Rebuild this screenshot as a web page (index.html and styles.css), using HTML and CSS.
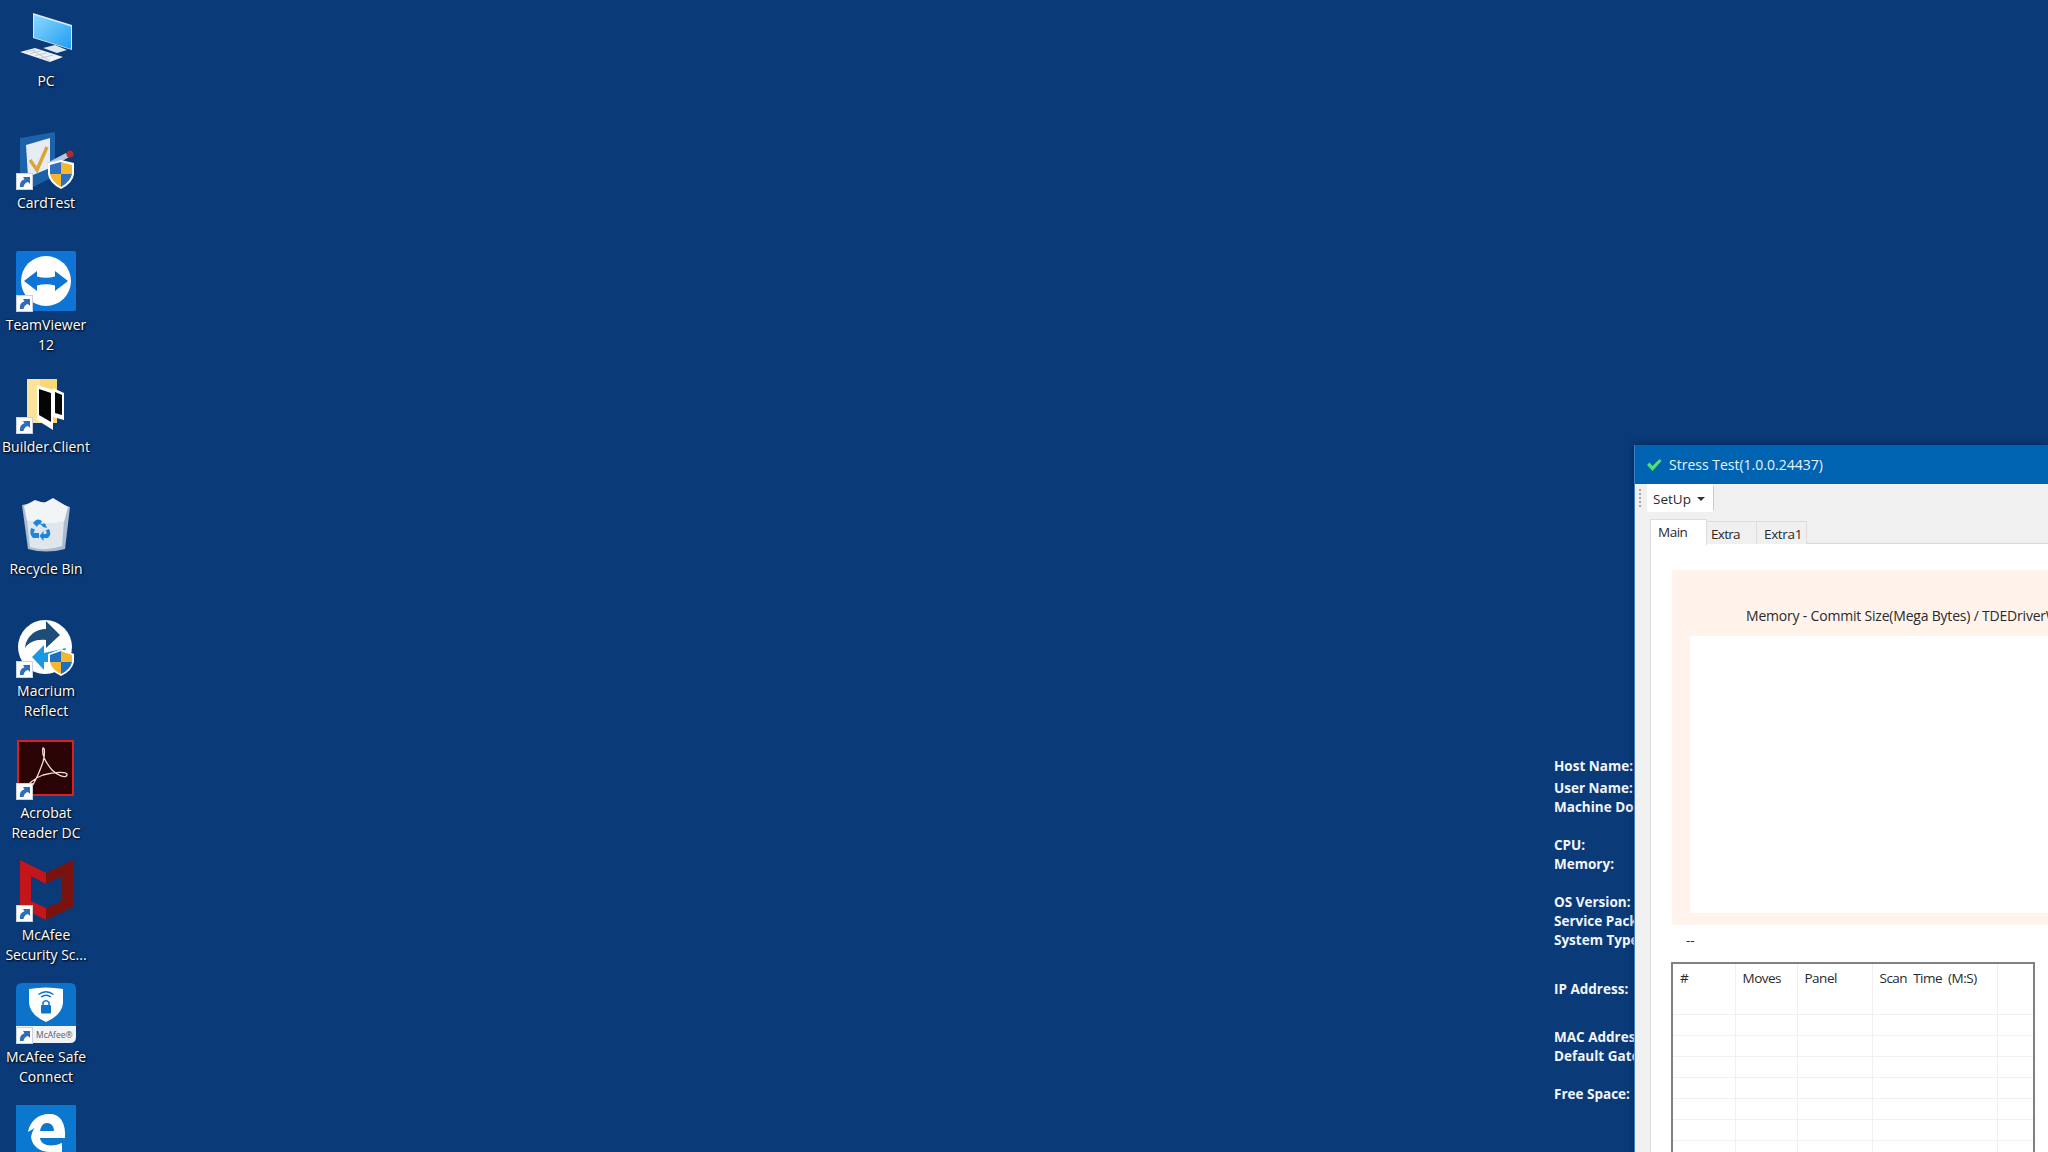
FILE: index.html
```html
<!DOCTYPE html>
<html lang="en">
<head>
<meta charset="utf-8">
<title>Desktop</title>
<link rel="stylesheet" href="styles.css">
</head>
<body>
<svg class="defs" width="0" height="0" aria-hidden="true">
  <defs>
    <symbol id="arrow" viewBox="0 0 17 17">
      <rect x="0.5" y="0.5" width="16" height="16" fill="#fff" stroke="#c9d3de"/>
      <path d="M4 14C3.500 9.500 5.500 7 8.500 6.200L7 4H14V11L12 9C10 9.500 8 11 7.500 14Z" fill="#2f6db5"/>
    </symbol>
    <linearGradient id="screen" x1="0" y1="0" x2="1" y2="1">
      <stop offset="0" stop-color="#8ad8ff"/>
      <stop offset="1" stop-color="#1f9df2"/>
    </linearGradient>
  </defs>
</svg>
<div class="icons">
  <div class="item">
    <div class="icon">
      <svg viewBox="0 0 60 60" class="art">
        <path d="M17 5L56 17V42L17 30Z" fill="#dce8f2"/>
        <path d="M18 7L55 18.500V41L18 29.500Z" fill="url(#screen)"/>
        <path d="M27 40L39 37L51 42L41 45Z" fill="#dfe7ee"/>
        <path d="M4 44L19 40L47 49L34 54Z" fill="#eef2f6"/>
        <path d="M10 44L20 41.500M14 45.500L25 43M19 47.500L31 45M25 50L37 47M16 42L34 53" stroke="#b5c0ca" stroke-width=".8"/>
      </svg>
    </div>
    <div class="label">PC</div>
  </div>
  <div class="item">
    <div class="icon">
      <svg viewBox="0 0 60 60" class="art">
        <path d="M4 8L39 2V46L17 57Q6 54 4 47Z" fill="#1c62ab"/>
        <path d="M10 15L34 8V38L12 47Z" fill="#e7ecf3"/>
        <path d="M14 30L21 40L31 17" fill="none" stroke="#d9a53a" stroke-width="3.500"/>
        <path d="M31 33L50 23L53 27L38 36Z" fill="#b7c7dc"/>
        <circle cx="54" cy="24" r="3.500" fill="#b32b25"/>
        <path d="M32 33L45 30L58 33V44Q57 53 45 59Q33 53 32 44Z" fill="#fff"/>
        <path d="M45 32L34 35V44H45Z" fill="#2d6fc0"/>
        <path d="M45 32L56 35V44H45Z" fill="#f5b631"/>
        <path d="M34 44H45V57Q36 52 34 44Z" fill="#f5b631"/>
        <path d="M45 44H56Q54 52 45 57Z" fill="#2d6fc0"/>
      </svg>
      <svg class="arrow"><use href="#arrow"/></svg>
    </div>
    <div class="label">CardTest</div>
  </div>
  <div class="item">
    <div class="icon">
      <svg viewBox="0 0 60 60" class="art">
        <rect y="-1" width="60" height="60" rx="2" fill="#0e75d6"/>
        <circle cx="30" cy="29" r="25" fill="#fff"/>
        <path d="M8 29L21 19V24.500Q30 27 39 24.500V19L52 29L39 39V33.500Q30 31 21 33.500V39Z" fill="#0e75d6"/>
      </svg>
      <svg class="arrow"><use href="#arrow"/></svg>
    </div>
    <div class="label">TeamViewer<br>12</div>
  </div>
  <div class="item">
    <div class="icon">
      <svg viewBox="0 0 60 60" class="art">
        <path d="M11 5H41V49H11Z" fill="#f8d775"/>
        <path d="M11 5H24V49H11Z" fill="#fbe39b"/>
        <path d="M37 14L48 19V46L37 43Z" fill="#fff"/>
        <path d="M39 18L46 21V41L39 39Z" fill="#060606"/>
        <path d="M21 11L37 16V56L21 46Z" fill="#fff"/>
        <path d="M23 15L35 19V48L23 41Z" fill="#050505"/>
      </svg>
      <svg class="arrow"><use href="#arrow"/></svg>
    </div>
    <div class="label">Builder.Client</div>
  </div>
  <div class="item">
    <div class="icon">
      <svg viewBox="0 0 60 60" class="art">
        <path d="M6 9Q30 2 54 11L49 53Q30 58 12 53Z" fill="#a9bccd"/>
        <path d="M8 10L19 4L28 7L37 2L52 11L48 26Q30 30 11 25Z" fill="#f2f5f8"/>
        <path d="M11 24Q30 30 48 25L46 50Q30 56 14 51Z" fill="#dfe6ed"/>
        <path d="M17 27Q21 21 26 25L24.500 28L29 27.500L31 32L27 31L25.500 29Q22 27 21 31ZM15 32L19 33.500L17.500 37H23V42H17Q13 38 15 32ZM33 33Q36 38 32 42H27.500V45L23.500 40L27.500 35V38H30Q31.500 36 29.500 34.500Z" fill="#1c86dd"/>
      </svg>
    </div>
    <div class="label">Recycle Bin</div>
  </div>
  <div class="item">
    <div class="icon">
      <svg viewBox="0 0 60 60" class="art">
        <circle cx="29" cy="29" r="27" fill="#fff"/>
        <path d="M9 30C10 18 20 11 30 11V3L44 17L30 30V22C20 21 13 24 9 30Z" fill="#1d4d78"/>
        <path d="M50 30L28 35V27L16 39L28 52V44H40L47 38Z" fill="#1998e6"/>
        <path d="M32 36L45 31L58 36V44Q56 53 45 58Q34 53 32 44Z" fill="#fff"/>
        <path d="M45 33L34 37V44H45Z" fill="#1c6fc2"/>
        <path d="M45 33L56 37V44H45Z" fill="#f5b631"/>
        <path d="M34 44H45V56Q36 52 34 44Z" fill="#f5b631"/>
        <path d="M45 44H56Q54 52 45 56Z" fill="#1c6fc2"/>
      </svg>
      <svg class="arrow"><use href="#arrow"/></svg>
    </div>
    <div class="label">Macrium<br>Reflect</div>
  </div>
  <div class="item">
    <div class="icon">
      <svg viewBox="0 0 60 60" class="art">
        <rect x="2" y="1" width="55" height="54" fill="#2a0404" stroke="#d8201f" stroke-width="2"/>
        <path d="M27 8C25 16 31 24 36 30C41 35 50 39 51 35C52 31 38 32 27 35C18 38 9 46 12 49C15 51 22 36 27 22C29 14 29 8 27 8Z" fill="none" stroke="#f3dada" stroke-width="1.300"/>
      </svg>
      <svg class="arrow"><use href="#arrow"/></svg>
    </div>
    <div class="label">Acrobat<br>Reader DC</div>
  </div>
  <div class="item">
    <div class="icon">
      <svg viewBox="0 0 60 60" class="art">
        <path d="M4 -2L30 11V22L15 14V39L30 46V58L4 45Z" fill="#c2161b"/>
        <path d="M57 -2L30 11V22L46 14V39L30 46V58L57 45Z" fill="#7a1310"/>
      </svg>
      <svg class="arrow"><use href="#arrow"/></svg>
    </div>
    <div class="label">McAfee<br>Security Sc...</div>
  </div>
  <div class="item">
    <div class="icon">
      <svg viewBox="0 0 60 60" class="art">
        <path d="M6 -1H54Q60 -1 60 5V42H0V5Q0 -1 6 -1Z" fill="#0d72c9"/>
        <path d="M0 42H60V53Q60 59 54 59H6Q0 59 0 53Z" fill="#f1f3f5"/>
        <path d="M13 5Q30 2 47 5V19Q46 31 30 38Q14 31 13 19Z" fill="#fff"/>
        <rect x="25" y="21" width="10" height="8.500" rx="1" fill="#0d72c9"/>
        <path d="M27 21V18.500Q30 15 33 18.500V21" fill="none" stroke="#0d72c9" stroke-width="1.500"/>
        <path d="M25 13Q30 9.500 35 13M22.500 10.500Q30 5 37.500 10.500" fill="none" stroke="#0d72c9" stroke-width="1.400"/>
      </svg>
      <span class="mcafee-mark">McAfee®</span>
      <svg class="arrow"><use href="#arrow"/></svg>
    </div>
    <div class="label">McAfee Safe<br>Connect</div>
  </div>
  <div class="item">
    <div class="icon">
      <svg viewBox="0 0 60 60" class="art">
        <rect y="-1" width="60" height="60" fill="#0b78d0"/>
        <path d="M12 26C14 14 24 7 35 8C46 9 50 20 49 32H24C25 39 34 42 46 37V46H34C24 46 16 40 15 31C17 22 20 19 25 17C22 19 19 22 12 26ZM24 25H38C38 20 35 17 31 17C27 17 25 20 24 25Z" fill="#fff"/>
      </svg>
    </div>
  </div>
</div>

<div class="sysinfo">
  <div class="info-group">Host Name:</div>
  <div class="info-group near">User Name:<br>Machine Domain:</div>
  <div class="info-group gap">CPU:<br>Memory:</div>
  <div class="info-group gap">OS Version:<br>Service Pack:<br>System Type:</div>
  <div class="info-group wide">IP Address:</div>
  <div class="info-group wide-tight">MAC Address:<br>Default Gateway:</div>
  <div class="info-group gap">Free Space:</div>
</div>

<div class="window">
  <div class="titlebar">
    <svg class="check" viewBox="0 0 16 14"><path d="M1 7L3.500 4.500L6.500 8L13.500 1L15.500 3L6.500 13Z" fill="#4fe06f"/></svg>
    <span>Stress Test(1.0.0.24437)</span>
  </div>
  <div class="toolbar">
    <div class="grip"></div>
    <div class="menu">SetUp <span class="caret"></span></div>
    <div class="tool-sep"></div>
  </div>
  <div class="tabs">
    <div class="tab active">Main</div>
    <div class="tab">Extra</div>
    <div class="tab wide-tab">Extra1</div>
    <div class="tab-rest"></div>
  </div>
  <div class="page">
    <div class="chart">
      <div class="chart-title">Memory - Commit Size(Mega Bytes) / TDEDriverW</div>
      <div class="plot"></div>
    </div>
    <div class="dash">--</div>
    <table class="grid">
      <colgroup><col class="c1"><col class="c2"><col class="c3"><col class="c4"><col class="c5"></colgroup>
      <thead>
        <tr><th>#</th><th>Moves</th><th>Panel</th><th>Scan Time (M:S)</th><th></th></tr>
      </thead>
      <tbody>
        <tr><td></td><td></td><td></td><td></td><td></td></tr>
        <tr><td></td><td></td><td></td><td></td><td></td></tr>
        <tr><td></td><td></td><td></td><td></td><td></td></tr>
        <tr><td></td><td></td><td></td><td></td><td></td></tr>
        <tr><td></td><td></td><td></td><td></td><td></td></tr>
        <tr><td></td><td></td><td></td><td></td><td></td></tr>
        <tr><td></td><td></td><td></td><td></td><td></td></tr>
      </tbody>
    </table>
  </div>
</div>
</body>
</html>
```
FILE: styles.css
```css
* { box-sizing: border-box; }
html, body { margin: 0; height: 100%; }
body {
  position: relative;
  width: 2048px;
  height: 1152px;
  overflow: hidden;
  background: #0a3a78;
  font-family: "Open Sans", "Noto Sans", sans-serif;
}
.defs { position: absolute; }
.icons { display: flex; flex-direction: column; padding-top: 8px; width: 92px; height: 1152px; overflow: hidden; }
.item { flex: 0 0 122px; display: flex; flex-direction: column; align-items: center; }
.icon { position: relative; width: 60px; height: 60px; flex: none; margin-bottom: 3px; }
.art { display: block; width: 60px; height: 60px; overflow: visible; }
.arrow { position: absolute; left: 0; bottom: 0; width: 17px; height: 17px; }
.mcafee-mark {
  position: absolute;
  left: 20px;
  bottom: 4px;
  font-size: 8.5px;
  line-height: 10px;
  color: #55606a;
}
.label {
  width: 92px;
  text-align: center;
  color: #fff;
  font-size: 14px;
  line-height: 20px;
  text-shadow: 1px 1px 2px #000, 0 0 2px rgba(0,0,0,.6);
  white-space: nowrap;
}
.sysinfo {
  position: absolute;
  left: 1554px;
  top: 757px;
  width: 200px;
  color: #f2f6fa;
  font-size: 13.5px;
  font-weight: 700;
  line-height: 19px;
}
.info-group.near { margin-top: 3px; }
.info-group.gap { margin-top: 19px; }
.info-group.wide { margin-top: 30px; }
.info-group.wide-tight { margin-top: 29px; }
.window {
  position: absolute;
  left: 1634px;
  top: 445px;
  width: 414px;
  height: 707px;
  overflow: hidden;
  background: #f0f0f0;
  border-left: 1px solid #3f80c4;
  box-shadow: 0 0 6px rgba(0,20,50,.55);
  color: #2a2a2a;
  font-family: "Open Sans", sans-serif;
  font-size: 13.5px;
}
.titlebar {
  height: 39px;
  background: #0063b1;
  color: #eaf3fb;
  display: flex;
  align-items: center;
  padding-left: 11px;
  gap: 7px;
  font-size: 14px;
  white-space: nowrap;
}
.check { width: 16px; height: 14px; flex: none; }
.toolbar { height: 35px; display: flex; align-items: flex-start; padding-left: 4px; }
.grip {
  width: 2px;
  height: 20px;
  margin: 5px 6px 0 0;
  background: repeating-linear-gradient(#a8a8a8 0 2px, transparent 2px 4px);
}
.menu {
  width: 66px;
  height: 28px;
  background: #fff;
  display: flex;
  align-items: center;
  gap: 6px;
  padding: 1px 0 0 6px;
  font-size: 13.5px;
}
.caret {
  width: 0;
  height: 0;
  border: 4px solid transparent;
  border-top: 4px solid #333;
  border-bottom: 0;
}
.tool-sep { width: 1px; height: 24px; margin-top: 2px; background: #c8c8c8; }
.tabs { display: flex; align-items: flex-end; height: 25px; padding-left: 15px; }
.tab {
  width: 50px;
  height: 23px;
  padding: 3px 0 0 4px;
  border: 1px solid #dcdcdc;
  border-bottom: 0;
  border-left: 0;
  background: #f0f0f0;
  line-height: 18px;
  letter-spacing: -.7px;
}
.tab.wide-tab { letter-spacing: -.35px; padding-left: 7px; }
.tab.active {
  height: 26px;
  width: 57px;
  background: #fff;
  border-left: 1px solid #dcdcdc;
  padding: 3px 0 0 7px;
  letter-spacing: -.5px;
  position: relative;
  margin-bottom: -1px;
}
.tab-rest { flex: 1; border-bottom: 1px solid #d9d9d9; }
.page {
  margin-left: 15px;
  height: 620px;
  background: #fff;
  padding: 26px 0 0 21px;
  border-left: 1px solid #dcdcdc;
}
.chart {
  background: #fff3ec;
  height: 355px;
  padding-top: 36px;
  overflow: hidden;
}
.chart-title {
  margin-left: 74px;
  font-size: 14px;
  line-height: 20px;
  letter-spacing: -.2px;
  white-space: nowrap;
}
.plot { margin: 10px 0 0 18px; height: 277px; background: #fff; }
.dash { margin: 5px 0 0 14px; height: 32px; line-height: 20px; }
.grid {
  width: 364px;
  margin-left: -1px;
  table-layout: fixed;
  border-collapse: collapse;
  border: 2px solid #808080;
  background: #fff;
}
.c1 { width: 63px; }
.c2 { width: 62px; }
.c3 { width: 75px; }
.c4 { width: 125px; }
.grid th {
  height: 51px;
  padding: 4px 0 0 7px;
  vertical-align: top;
  text-align: left;
  font-weight: 400;
  line-height: 20px;
  letter-spacing: -.5px;
  word-spacing: 3px;
  border-right: 1px solid #f0f0f0;
  border-bottom: 1px solid #f0f0f0;
}
.grid td {
  height: 21px;
  padding: 0;
  border-right: 1px solid #f0f0f0;
  border-bottom: 1px solid #f0f0f0;
}
```
